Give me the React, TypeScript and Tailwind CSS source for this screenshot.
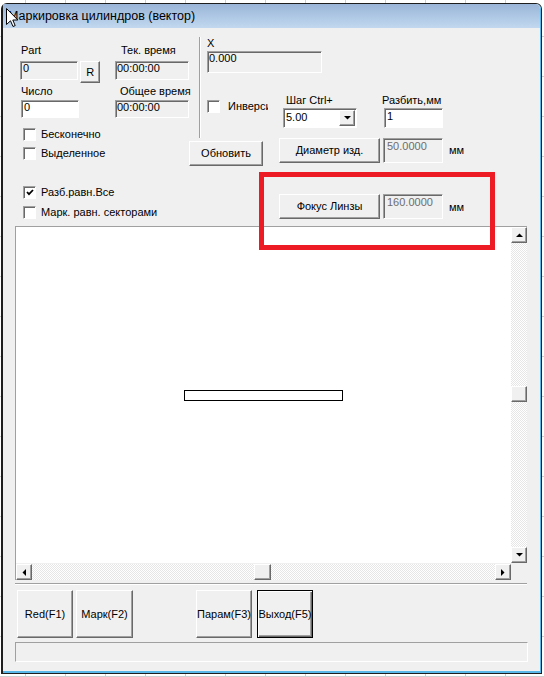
import React from 'react';

// classic 3D edges
const sunken =
  'border border-t-[#a0a0a0] border-l-[#a0a0a0] border-r-white border-b-white shadow-[inset_1px_1px_0_#696969]';
const raised =
  'border border-t-white border-l-white border-r-[#696969] border-b-[#696969] shadow-[inset_-1px_-1px_0_#a0a0a0]';

function Field({ className = '', children }: { className?: string; children?: React.ReactNode }) {
  return <div className={`${sunken} flex items-start whitespace-nowrap overflow-hidden ${className}`}>{children}</div>;
}

function Btn({ className = '', children }: { className?: string; children?: React.ReactNode }) {
  return (
    <div className={`${raised} bg-[#f0f0f0] flex items-center justify-center whitespace-nowrap ${className}`}>
      {children}
    </div>
  );
}

function CheckBox({ checked = false }: { checked?: boolean }) {
  return (
    <div className={`${sunken} w-[13px] h-[13px] shrink-0 bg-white flex items-center justify-center`}>
      {checked && (
        <svg width="8" height="7" viewBox="0 0 8 7">
          <path d="M1 3 L3 5.2 L7 1" fill="none" stroke="#000" strokeWidth="1.8" />
        </svg>
      )}
    </div>
  );
}

function Arrow({ dir }: { dir: 'up' | 'down' | 'left' | 'right' }) {
  const pts = {
    up: '0,4 7,4 3.5,0.5',
    down: '0,0 7,0 3.5,3.5',
    left: '4,0 4,7 0.5,3.5',
    right: '0,0 0,7 3.5,3.5',
  }[dir];
  const vertical = dir === 'up' || dir === 'down';
  return (
    <svg width={vertical ? 7 : 4} height={vertical ? 4 : 7} viewBox={vertical ? '0 0 7 4' : '0 0 4 7'}>
      <polygon points={pts} fill="#000" />
    </svg>
  );
}

function ScrollBtn({ dir }: { dir: 'up' | 'down' | 'left' | 'right' }) {
  return (
    <Btn className="w-[16px] h-[16px] shrink-0">
      <Arrow dir={dir} />
    </Btn>
  );
}

const track =
  'bg-[repeating-conic-gradient(#ffffff_0_25%,#e6e6e6_0_50%)] bg-size-[2px_2px]';

export default function App() {
  return (
    <div className="relative w-[544px] h-[677px] overflow-hidden whitespace-nowrap bg-white bg-[linear-gradient(to_right,#cfcfcf_1px,transparent_1px),linear-gradient(to_bottom,#cfcfcf_1px,transparent_1px)] bg-size-[40px_40px] bg-position-[25px_36px] font-['Liberation_Sans',Arial,sans-serif] text-[11px] leading-[13px] text-black">
      {/* Window */}
      <div className="absolute left-[1px] top-[3px] w-[541px] h-[671px] rounded-t-[6px] border border-l-2 border-[#1e1e1e] bg-[#f0f0f0]">
        <div className="h-full flex flex-col border-r border-b-2 border-[#5ab8e8] rounded-tr-[5px]">
          {/* Title bar */}
          <div className="h-[24px] shrink-0 flex items-center pl-[5px] pt-px rounded-tr-[5px] bg-linear-to-b from-[#99b5d8] to-[#c2d8ef] text-[12.5px] leading-[15px]">
            Маркировка цилиндров (вектор)
          </div>

          {/* Client */}
          <div className="relative flex-1 flex flex-col">
            <div className="mt-[9px] h-[189px] flex">
              {/* Left column */}
              <div className="ml-[17px] w-[169px] shrink-0 flex flex-col">
                <div className="mt-[7px] flex">
                  <span className="w-[101px] shrink-0 pl-px">Part</span>
                  <span>Тек. время</span>
                </div>
                <div className="mt-[4px] flex items-start">
                  <Field className="w-[60px] h-[19px] bg-[#f0f0f0] pl-[2px]">0</Field>
                  <Btn className="ml-[2px] w-[20px] h-[22px]">R</Btn>
                  <Field className="ml-[15px] w-[74px] h-[19px] shrink-0 bg-[#f0f0f0] pl-px">00:00:00</Field>
                </div>
                <div className="mt-[2px] flex">
                  <span className="w-[100px] shrink-0 pl-px">Число</span>
                  <span>Общее время</span>
                </div>
                <div className="mt-[2px] flex items-start">
                  <Field className="ml-px w-[60px] h-[18px] bg-white pl-[2px]">0</Field>
                  <Field className="ml-[36px] w-[74px] h-[18px] shrink-0 bg-[#f0f0f0] pl-px">00:00:00</Field>
                </div>
                <div className="mt-[10px] ml-[3px] flex items-center gap-[5px]">
                  <CheckBox />
                  <span>Бесконечно</span>
                </div>
                <div className="mt-[6px] ml-[3px] flex items-center gap-[5px]">
                  <CheckBox />
                  <span>Выделенное</span>
                </div>
                <div className="mt-[26px] ml-[3px] flex items-center gap-[5px]">
                  <CheckBox checked />
                  <span>Разб.равн.Все</span>
                </div>
                <div className="mt-[7px] ml-[3px] flex items-center gap-[5px]">
                  <CheckBox />
                  <span>Марк. равн. секторами</span>
                </div>
              </div>

              {/* Right column */}
              <div className="flex flex-col">
                <div className="flex h-[101px]">
                  <div className="ml-[10px] w-[2px] border-l border-l-[#a0a0a0] border-r border-r-white" />
                  <div className="ml-[6px] flex flex-col">
                    <span>X</span>
                    <Field className="mt-px w-[115px] h-[22px] bg-[#f0f0f0] pl-px">0.000</Field>
                    <div className="mt-[21px] flex items-start">
                      <div className="mt-[6px] w-[61px] shrink-0 overflow-hidden flex items-center gap-[8px]">
                        <CheckBox />
                        <span>Инверсия</span>
                      </div>
                      <div className="ml-[15px] flex flex-col">
                        <span className="pl-[3px]">Шаг Ctrl+</span>
                        <div className={`${sunken} mt-px w-[74px] h-[20px] bg-white flex`}>
                          <span className="flex-1 pl-[2px] pt-[2px]">5.00</span>
                          <Btn className="w-[16px] m-px">
                            <Arrow dir="down" />
                          </Btn>
                        </div>
                      </div>
                      <div className="ml-[25px] flex flex-col">
                        <span>Разбить,мм</span>
                        <Field className="ml-[2px] mt-px w-[59px] h-[20px] bg-white pl-[2px] pt-px">1</Field>
                      </div>
                    </div>
                  </div>
                </div>

                <div className="flex items-start">
                  <Btn className="mt-[3px] w-[74px] h-[25px]">Обновить</Btn>
                  <Btn className="ml-[16px] w-[101px] h-[25px]">Диаметр изд.</Btn>
                  <Field className="ml-[3px] w-[60px] h-[25px] bg-[#f0f0f0] pl-[3px] pt-px text-[#6d6d6d]">50.0000</Field>
                  <span className="ml-[6px] mt-[6px]">мм</span>
                </div>

                <div className="mt-[28px] ml-[90px] flex items-start">
                  <Btn className="w-[101px] h-[25px]">Фокус Линзы</Btn>
                  <Field className="ml-[3px] w-[60px] h-[25px] bg-[#f0f0f0] pl-[3px] pt-px text-[#6d6d6d]">160.0000</Field>
                  <span className="ml-[6px] mt-[7px]">мм</span>
                </div>
              </div>
            </div>

            {/* Drawing area with scrollbars */}
            <div className="ml-[12px] w-[512px] h-[354px] border-t border-l border-[#a0a0a0] grid grid-cols-[1fr_16px] grid-rows-[1fr_17px]">
              <div className="bg-white overflow-hidden">
                <div className="ml-[168px] mt-[163px] w-[159px] h-[11px] border border-black" />
              </div>
              <div className="flex flex-col">
                <ScrollBtn dir="up" />
                <div className={`flex-1 ${track}`}>
                  <Btn className="mt-[143px] w-[16px] h-[16px]" />
                </div>
                <ScrollBtn dir="down" />
              </div>
              <div className="flex pt-px">
                <ScrollBtn dir="left" />
                <div className={`flex-1 ${track}`}>
                  <Btn className="ml-[222px] w-[17px] h-[16px]" />
                </div>
                <ScrollBtn dir="right" />
              </div>
              <div className="bg-[#f0f0f0]" />
            </div>

            <div className="mt-[3px] ml-[12px] w-[512px] h-[2px] border-t border-t-[#a0a0a0] border-b border-b-white" />

            {/* Function keys */}
            <div className="mt-[5px] ml-[14px] flex">
              <Btn className="w-[56px] h-[48px]">Red(F1)</Btn>
              <Btn className="ml-[3px] w-[57px] h-[48px]">Марк(F2)</Btn>
              <Btn className="ml-[63px] w-[56px] h-[48px]">Парам(F3)</Btn>
              <div className="ml-[5px] w-[56px] h-[48px] border border-black bg-[#f0f0f0] flex items-center justify-center shadow-[inset_1px_1px_0_#fff,inset_-1px_-1px_0_#696969,inset_-2px_-2px_0_#a0a0a0]">
                Выход(F5)
              </div>
            </div>

            {/* Status bar */}
            <div className="mt-[4px] ml-[12px] w-[513px] h-[20px] border border-t-[#a0a0a0] border-l-[#a0a0a0] border-r-white border-b-white" />

            {/* Annotation frame */}
            <div className="absolute left-[256px] top-[144px] w-[236px] h-[78px] border-[5px] border-[#ed1c24] z-10" />
          </div>
        </div>
      </div>

      {/* Mouse cursor */}
      <svg className="absolute left-[6px] top-[8px]" width="13" height="20" viewBox="0 0 13 20">
        <path
          d="M0.5 0.5 L0.5 16.5 L4.5 12.8 L7 18.5 L9.2 17.6 L6.8 12 L11.8 12 Z"
          fill="#fff"
          stroke="#000"
          strokeWidth="1"
          strokeLinejoin="miter"
        />
      </svg>
    </div>
  );
}
